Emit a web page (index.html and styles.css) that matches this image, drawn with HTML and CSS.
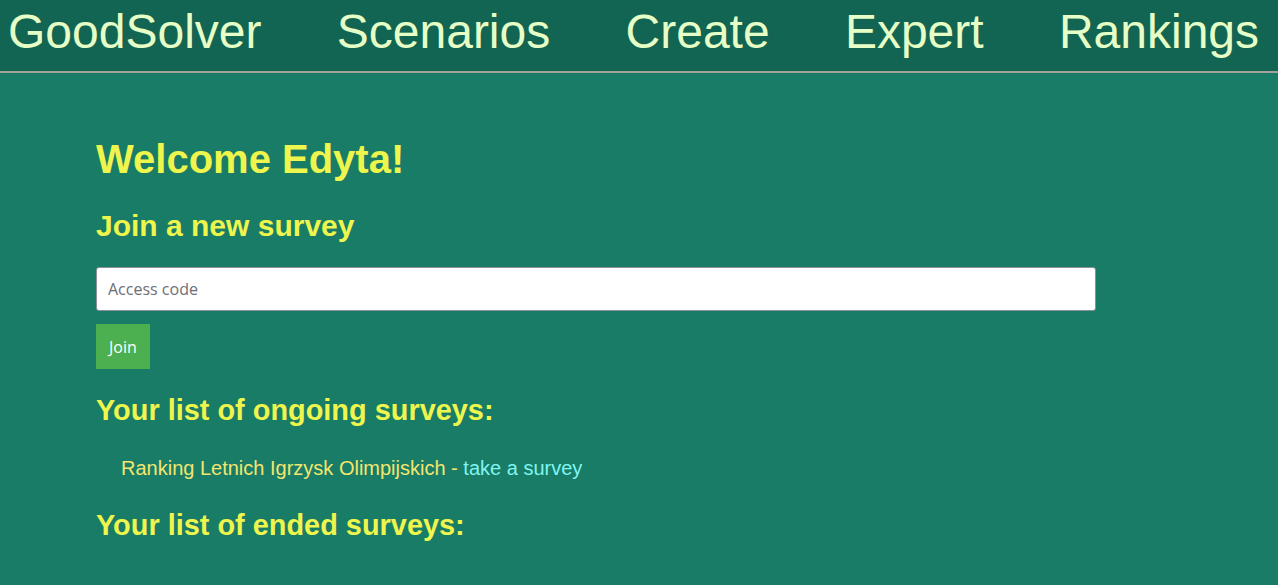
FILE: index.html
```html
<!DOCTYPE html>
<html>
<head>
<meta charset="utf-8">
<title>GoodSolver</title>
<link rel="stylesheet" href="styles.css">
</head>
<body>
<header class="topbar">
  <nav class="nav">
    <a class="nav-item" href="#">GoodSolver</a>
    <a class="nav-item" href="#">Scenarios</a>
    <a class="nav-item" href="#">Create</a>
    <a class="nav-item" href="#">Expert</a>
    <a class="nav-item" href="#">Rankings</a>
  </nav>
</header>
<main class="content">
  <h1 class="welcome">Welcome Edyta!</h1>
  <h2 class="section-title join-title">Join a new survey</h2>
  <form class="join-form">
    <input class="code-input" type="text" placeholder="Access code">
    <button class="join-btn" type="button">Join</button>
  </form>
  <h2 class="section-title">Your list of ongoing surveys:</h2>
  <ul class="survey-list">
    <li class="survey-item">Ranking Letnich Igrzysk Olimpijskich - <a class="survey-link" href="#">take a survey</a></li>
  </ul>
  <h2 class="section-title">Your list of ended surveys:</h2>
</main>
</body>
</html>
```

FILE: styles.css
```css
html, body {
  margin: 0;
  padding: 0;
}
body {
  background: #197c66;
  font-family: "Liberation Sans", Arial, sans-serif;
  min-height: 585px;
}
.topbar {
  background: #136553;
  height: 71px;
  border-bottom: 2px solid #a3a39a;
}
.nav {
  display: flex;
  gap: 75.3px;
  padding-left: 8px;
  height: 71px;
  align-items: flex-start;
}
.nav-item {
  color: #e6ffc6;
  text-decoration: none;
  font-size: 48px;
  line-height: 55px;
  margin-top: 4px;
}
.content {
  padding: 63px 0 0 96px;
}
.welcome {
  margin: 0;
  color: #eef54c;
  font-size: 40px;
  line-height: 46px;
  font-weight: bold;
}
.section-title {
  margin: 26px 0 0;
  color: #eef54c;
  font-size: 28.9px;
  line-height: 33px;
  font-weight: bold;
}
.join-title {
  font-size: 30px;
  line-height: 34px;
  margin-top: 27px;
}
.join-form {
  display: flex;
  flex-direction: column;
  align-items: flex-start;
  gap: 13px;
  margin-top: 24px;
}
.code-input {
  box-sizing: border-box;
  width: 1000px;
  height: 44px;
  margin: 0;
  padding: 0 11px;
  border: 1px solid #8a8f9a;
  border-radius: 3px;
  background: #fff;
  font-family: "Open Sans", "Noto Sans", sans-serif;
  font-size: 16px;
  color: #333;
}
.code-input::placeholder {
  color: #6c6f78;
}
.join-btn {
  box-sizing: border-box;
  height: 45px;
  padding: 0 13px;
  margin: 0;
  border: none;
  background: #4caf50;
  color: #fff;
  font-family: "Open Sans", "Noto Sans", sans-serif;
  font-size: 16px;
}
.join-form + .section-title {
  margin-top: 25px;
}
.survey-list {
  list-style: none;
  margin: 30px 0 0;
  padding: 0 0 0 25px;
}
.survey-item {
  color: #f2e66e;
  font-size: 20px;
  line-height: 23px;
}
.survey-link {
  color: #80f4f0;
  text-decoration: none;
}
.survey-list + .section-title {
  margin-top: 29px;
}
```
